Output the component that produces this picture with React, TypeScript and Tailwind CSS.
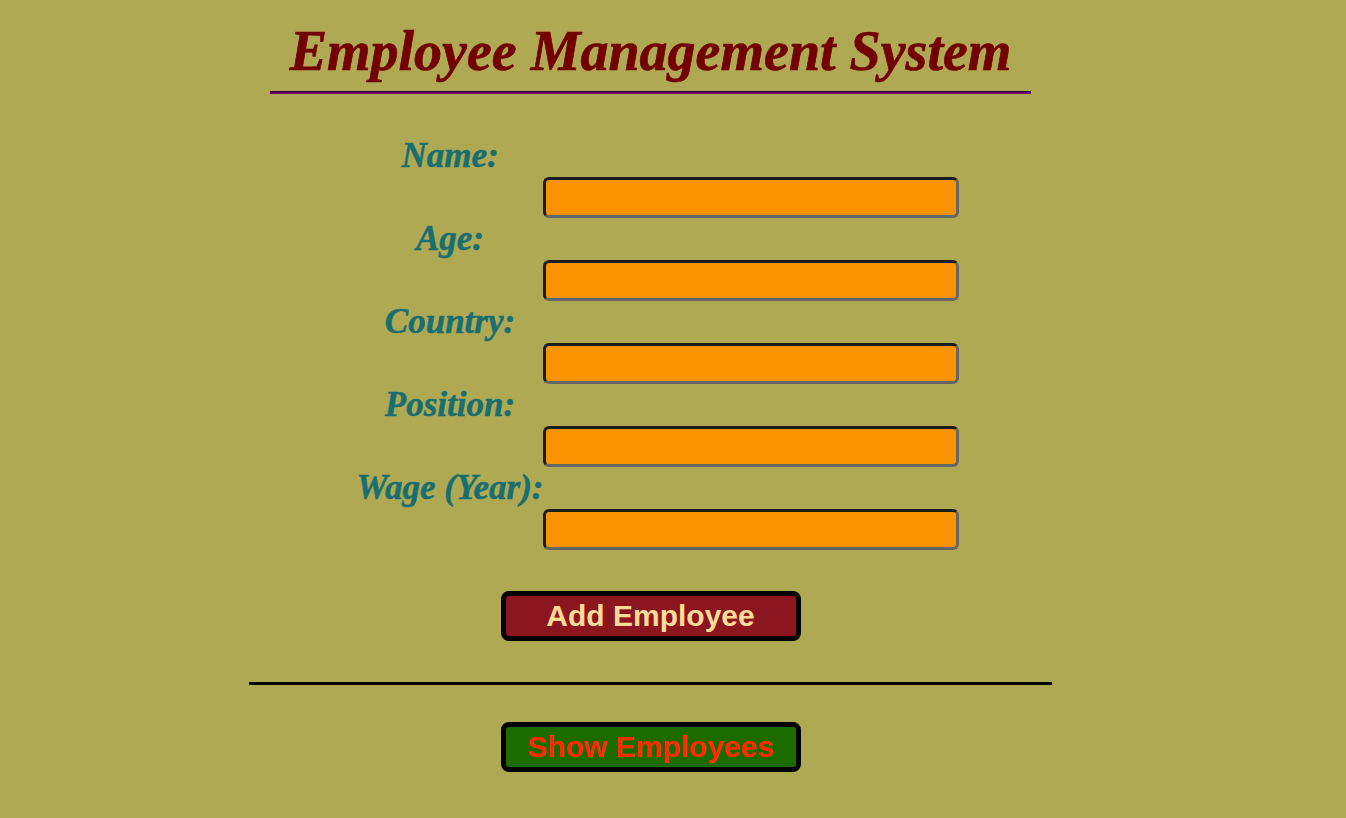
const fields = ["Name:", "Age:", "Country:", "Position:", "Wage (Year):"];

export default function App() {
  return (
    <div className="min-h-screen w-full bg-[#afa954]">
      <div className="ml-[249px] w-[803px] flex flex-col items-center pt-[20px]">
        {/* Title */}
        <div className="flex flex-col items-stretch">
          <h1 className="px-[20px] pb-[9px] text-[56px] leading-[62px] font-bold italic text-[#720000] [-webkit-text-stroke:0.7px_#720000] font-['Liberation_Serif',serif] whitespace-nowrap">
            Employee Management System
          </h1>
          <div className="h-[1px] bg-[#250025]" />
          <div className="h-[2px] bg-[#6b0070]" />
        </div>

        {/* Form */}
        <div className="w-full flex flex-col mt-[42px]">
          {fields.map((label) => (
            <div key={label} className="flex flex-col">
              <label className="ml-[101px] w-[200px] h-[40px] leading-[40px] text-center text-[35px] font-bold italic text-[#196e70] [-webkit-text-stroke:0.5px_#196e70] font-['Liberation_Serif',serif] whitespace-nowrap">
                {label}
              </label>
              <input
                type="text"
                className="ml-[294px] mt-[1px] mb-[1px] w-[416px] h-[41px] rounded-[6px] border-[3px] border-t-[#1c1c1c] border-l-[#1c1c1c] border-b-[#666666] border-r-[#666666] bg-[#f99300] outline-none"
              />
            </div>
          ))}
        </div>

        <button className="mt-[40px] w-[300px] h-[50px] rounded-[8px] border-[5px] border-black bg-[#8b1620] text-[#ffdb99] text-[30px] leading-none font-bold font-['Liberation_Sans',Arial,sans-serif]">
          Add Employee
        </button>

        <div className="mt-[41px] w-full h-[3px] bg-black" />

        <button className="mt-[37px] w-[300px] h-[50px] rounded-[8px] border-[5px] border-black bg-[#1b6b00] text-[#ff2a00] text-[30px] leading-none font-bold font-['Liberation_Sans',Arial,sans-serif]">
          Show Employees
        </button>
      </div>
    </div>
  );
}
